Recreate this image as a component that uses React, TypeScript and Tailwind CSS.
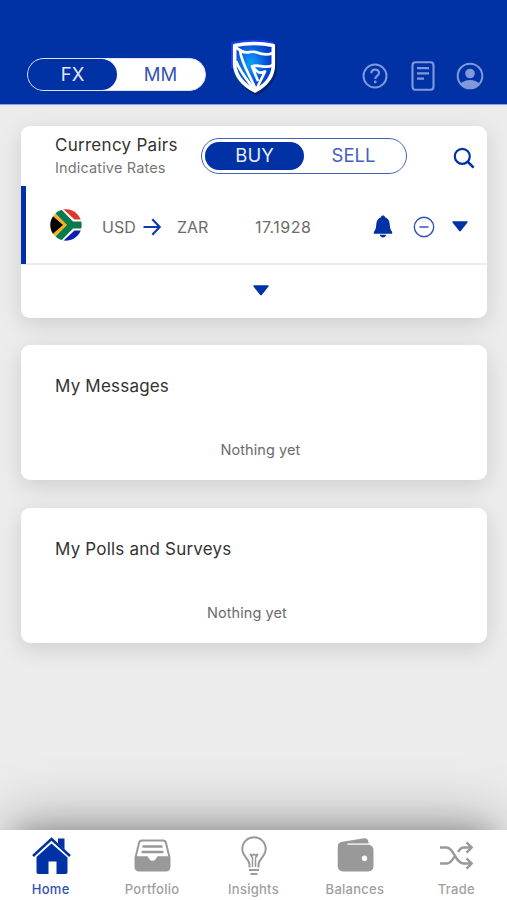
import classNames from "clsx";
import { useState } from "react";

type IconProps = React.ComponentProps<"svg">;

const ShieldLogo = (props: IconProps) => (
  <svg viewBox="0 0 48 58" fill="none" {...props}>
    <defs>
      <radialGradient id="shield" cx="0.42" cy="0.42" r="0.55">
        <stop offset="0" stopColor="#12a0f5" />
        <stop offset="0.5" stopColor="#0a6be4" />
        <stop offset="1" stopColor="#0638c4" />
      </radialGradient>
    </defs>
    <path
      d="M5 8Q24 3 44 8V27Q44 44 25 54Q7 44 5 27Z"
      stroke="#0a1d5e"
      strokeOpacity="0.750"
      strokeWidth="4"
      transform="translate(1 1.500)"
    />
    <path d="M2.500 30V5.500Q24 1 43 5.500" stroke="#1b3df0" strokeWidth="3" />
    <path
      d="M4.700 7.500Q24 3.500 43.300 7.500V27Q43.300 43 25 53Q6 43 4.700 27Z"
      fill="url(#shield)"
      stroke="#fff"
      strokeWidth="3.600"
      strokeLinejoin="round"
    />
    <path
      d="M5.500 9.500L11.500 13C17 16.500 21 12 27 14.500C33 17 37 17.500 43 15M10 12C11 25 20 37 26 52M6 23C10 34 18 43 24 51"
      stroke="#fff"
      strokeWidth="2.700"
      strokeLinejoin="round"
    />
    <path
      d="M28 43L22 28.500C28 25 35 32 43 27M22 28.500C25 30 26 33.500 29 34.500Q32 35 35 33.500L27 50"
      stroke="#fff"
      strokeWidth="2.700"
      strokeLinejoin="round"
    />
  </svg>
);

const HelpIcon = (props: IconProps) => (
  <svg viewBox="0 0 26 26" fill="none" stroke="currentColor" {...props}>
    <circle cx="13" cy="13" r="11.500" strokeWidth="2" />
    <path d="M9.300 10.300C9.300 5.400 17 5.500 17 10C17 12.700 13.200 13 13.200 16" strokeWidth="2.200" />
    <circle cx="13.200" cy="18.900" r="1.400" fill="currentColor" stroke="none" />
  </svg>
);

const DocumentIcon = (props: IconProps) => (
  <svg viewBox="0 0 24 30" fill="none" stroke="currentColor" {...props}>
    <rect x="1.500" y="1.200" width="21" height="27.600" rx="3" strokeWidth="2.100" />
    <path d="M6 7.200H18M6 12.400H18M6 17.600H13" strokeWidth="2.200" />
  </svg>
);

const ProfileIcon = (props: IconProps) => (
  <svg viewBox="0 0 28 28" fill="none" {...props}>
    <circle cx="14" cy="14" r="12.300" stroke="currentColor" strokeWidth="2" />
    <circle cx="14" cy="11.500" r="4.800" fill="currentColor" />
    <path d="M4.500 22C8.500 16.800 19.500 16.800 23.500 22C18.500 28 9.500 28 4.500 22Z" fill="currentColor" />
  </svg>
);

const SearchIcon = (props: IconProps) => (
  <svg viewBox="0 0 22 22" fill="none" stroke="currentColor" {...props}>
    <circle cx="9.300" cy="9.300" r="7.500" strokeWidth="2.200" />
    <path d="M14.500 14.500L20.600 20.600" strokeWidth="2.500" />
  </svg>
);

const FlagIcon = (props: IconProps) => (
  <svg viewBox="0 0 32 32" {...props}>
    <clipPath id="flag">
      <circle cx="16" cy="16" r="15.700" />
    </clipPath>
    <g clipPath="url(#flag)">
      <path fill="#fff" d="M0 0H32V32H0Z" />
      <path fill="#e0362c" d="M13 0H32V10.500H24.500Z" />
      <path fill="#0c1fb0" d="M13 32H32V21.500H24.500Z" />
      <path d="M5 -1L21.500 16H33M5 33L21.500 16" fill="none" stroke="#0b7a4b" strokeWidth="7" />
      <path fill="#f5b324" d="M0 0L17 16L0 32Z" />
      <path fill="#000" d="M-1 4L13 16L-1 28Z" />
    </g>
  </svg>
);

const ArrowIcon = (props: IconProps) => (
  <svg viewBox="0 0 18 18" fill="none" stroke="currentColor" strokeWidth="2.200" {...props}>
    <path d="M0.500 9H16.500M9.300 1.200L16.700 9L9.300 16.800" />
  </svg>
);

const BellIcon = (props: IconProps) => (
  <svg viewBox="0 0 20 23" fill="currentColor" {...props}>
    <path d="M10 0.500C11.200 0.500 11.900 1.200 12 2.200C15 3.200 16.500 5.800 16.700 9C16.900 13 17.300 14.600 19.200 17V18.700H0.800V17C2.700 14.600 3.100 13 3.300 9C3.500 5.800 5 3.200 8 2.200C8.100 1.200 8.800 0.500 10 0.500Z" />
    <path d="M6.800 19.700H13.200C12.600 23.300 7.400 23.300 6.800 19.700Z" />
  </svg>
);

const MinusIcon = (props: IconProps) => (
  <svg viewBox="0 0 22 22" fill="none" stroke="currentColor" {...props}>
    <circle cx="11" cy="11" r="9.700" strokeWidth="1.400" />
    <path d="M6.500 11H15.500" strokeWidth="1.500" />
  </svg>
);

const CaretIcon = (props: IconProps) => (
  <svg viewBox="0 0 16 11" fill="currentColor" {...props}>
    <path d="M1 0.300H15Q16.200 0.500 15.500 1.600L8.800 10Q8 10.900 7.200 10L0.500 1.600Q-0.200 0.500 1 0.300Z" />
  </svg>
);

const HomeIcon = (props: IconProps) => (
  <svg viewBox="0 0 40 40" fill="currentColor" {...props}>
    <path d="M27 3.500H33.500V14.500L27 8.500Z" />
    <path d="M20.500 8.500L36.500 22.500V37.300Q36.500 39 34.800 39H25.500V26.500H17.500V39H7.200Q5.500 39 5.500 37.300V22Z" />
    <path d="M2 21L20.500 4L39 21" fill="none" stroke="currentColor" strokeWidth="2.500" />
  </svg>
);

const PortfolioIcon = (props: IconProps) => (
  <svg viewBox="0 0 40 40" fill="currentColor" {...props}>
    <path
      d="M10 5.500H31Q33.500 5.500 34 8L37.500 22.500V31.500Q37.500 35.500 33.500 35.500H7.500Q3.500 35.500 3.500 31.500V22.500L7 8Q7.500 5.500 10 5.500Z"
      fill="none"
      stroke="currentColor"
      strokeWidth="2"
    />
    <path d="M3.500 21.300H15Q16 21.300 16.500 22.700Q17.800 25.800 20.500 25.800Q23.200 25.800 24.500 22.700Q25 21.300 26 21.300H37.500V31.500Q37.500 35.500 33.500 35.500H7.500Q3.500 35.500 3.500 31.500Z" />
    <path d="M10.500 11.500H30.500M9.500 17H31.500" stroke="currentColor" strokeWidth="2.300" />
  </svg>
);

const InsightsIcon = (props: IconProps) => (
  <svg viewBox="0 0 40 40" fill="none" stroke="currentColor" strokeWidth="2" {...props}>
    <path d="M16.500 32.500V29.500C16.500 24 9.300 21.500 9.300 14C9.300 7.200 14.500 2.300 21 2.300S32.700 7.200 32.700 14C32.700 21.500 25.500 24 25.500 29.500V32.500" />
    <path d="M19.500 32V23L17 19L19.500 20.500L21 19L22.500 20.500L25 19L22.500 23V32" strokeWidth="1.500" />
    <path d="M16 35H26M17.500 39H24.500" strokeWidth="2" />
  </svg>
);

const BalancesIcon = (props: IconProps) => (
  <svg viewBox="0 0 40 40" fill="currentColor" {...props}>
    <path
      fillRule="evenodd"
      d="M2.700 12Q2.700 7.200 7.500 6.800L29 3.300Q32.900 2.800 33.500 7.300L34 9.800Q38.500 10.800 38.500 15.500V31Q38.500 36.400 33 36.400H8.200Q2.700 36.400 2.700 31ZM32.200 23.300A2.700 2.900 0 1 0 26.800 23.300A2.700 2.900 0 1 0 32.200 23.300Z"
    />
    <path d="M12.500 9.100H34" stroke="#fff" strokeOpacity="0.850" strokeWidth="1.500" />
  </svg>
);

const TradeIcon = (props: IconProps) => (
  <svg viewBox="0 0 40 40" fill="none" stroke="currentColor" strokeWidth="2.400" {...props}>
    <path d="M4 12.500H10.500C18 12.500 19.500 28.500 27.500 28.500H35.500M4 28.500H10.500C14.500 28.500 16.700 24.800 18.500 21.500M22 17C23.500 14.300 25 12.500 28 12.500H35.500" />
    <path d="M30.500 7.300L35.700 12.500L30.500 17.700M30.500 23.300L35.700 28.500L30.500 33.700" />
  </svg>
);

const tabs = [
  { label: "Home", Icon: HomeIcon },
  { label: "Portfolio", Icon: PortfolioIcon },
  { label: "Insights", Icon: InsightsIcon },
  { label: "Balances", Icon: BalancesIcon },
  { label: "Trade", Icon: TradeIcon },
];

const Header = () => {
  const [market, setMarket] = useState("FX");

  return (
    <header className="flex h-[105px] shrink-0 items-start border-b border-[#8fa0dc] bg-[#0032a5] pl-[27px] text-[#8099dc]">
      <div className="mt-[58px] flex h-[33px] w-[179px] rounded-full border border-[#dde4fa] bg-white text-[18.500px]">
        {["FX", "MM"].map((name) => (
          <button
            key={name}
            type="button"
            onClick={() => setMarket(name)}
            className={classNames(
              "flex h-full items-center justify-center rounded-full",
              market === name ? "w-[89px] bg-[#0032a5] text-[#e4e9fa]" : "w-[87px] text-[#3452b4]"
            )}
          >
            {name}
          </button>
        ))}
      </div>
      <ShieldLogo className="mt-[38px] ml-[24px] h-[58px] w-[48px]" />
      <HelpIcon className="mt-[63px] ml-[83.500px] size-[26px]" />
      <DocumentIcon className="mt-[61px] ml-[23px] h-[30px] w-[24px]" />
      <ProfileIcon className="mt-[62px] ml-[21px] size-[28px]" />
    </header>
  );
};

const CurrencyCard = () => {
  const [side, setSide] = useState("BUY");

  return (
    <section className="flex h-[192px] flex-col overflow-hidden rounded-[9px] bg-white shadow-[0_6px_22px_rgba(0,0,0,0.130)]">
      <div className="flex h-[60px] shrink-0 items-start pl-[34px]">
        <div className="w-[146px] pt-[8px] whitespace-nowrap">
          <h2 className="text-[17px] leading-[22px] tracking-[0.280px] text-[#333]">Currency Pairs</h2>
          <p className="mt-[2px] text-[14.500px] leading-[20px] tracking-[0.150px] text-[#777]">Indicative Rates</p>
        </div>
        <div className="mt-[12px] flex h-[36px] w-[206px] rounded-full border-[1.500px] border-[#4660bb] p-[3px] text-[18.500px]">
          {["BUY", "SELL"].map((name) => (
            <button
              key={name}
              type="button"
              onClick={() => setSide(name)}
              className={classNames(
                "flex h-full w-[99px] items-center justify-center rounded-full",
                side === name ? "bg-[#0032a5] text-[#e6ebfa]" : "text-[#4660bb]"
              )}
            >
              {name}
            </button>
          ))}
        </div>
        <SearchIcon className="mt-[21px] ml-[46px] size-[22px] text-[#0032a5]" />
      </div>
      <div className="flex h-[79px] shrink-0 items-center border-b-2 border-[#ededed] text-[16px] text-[#6b6b6b]">
        <div className="h-[78px] w-[5px] bg-[#0032a5]" />
        <FlagIcon className="ml-[24px] size-[32px]" />
        <div className="flex flex-1 items-center pt-[4px]">
          <span className="ml-[20px] w-[41px]">USD</span>
          <ArrowIcon className="size-[18px] text-[#0f3cad]" />
          <span className="ml-[16px] w-[78px]">ZAR</span>
          <span className="w-[118px] tracking-[0.500px]">17.1928</span>
          <BellIcon className="h-[23px] w-[20px] text-[#0032a5]" />
          <MinusIcon className="ml-[19.500px] size-[22px] text-[#3452b4]" />
          <CaretIcon className="ml-[17.500px] h-[11px] w-[16px] text-[#0032a5]" />
        </div>
      </div>
      <div className="flex flex-1 items-center justify-center pb-[3px] pl-[14px] text-[#0032a5]">
        <CaretIcon className="h-[11px] w-[16px]" />
      </div>
    </section>
  );
};

const EmptyCard = ({ title, noteClassName }: { title: string; noteClassName: string }) => (
  <section className="flex h-[135px] flex-col rounded-[9px] bg-white pl-[34px] shadow-[0_6px_22px_rgba(0,0,0,0.130)]">
    <h2 className="mt-[30px] text-[17px] leading-[22px] tracking-[0.200px] text-[#333]">{title}</h2>
    <p className={classNames("mt-[43px] text-[14.500px] leading-[20px] tracking-[0.060px] text-[#6b6b6b]", noteClassName)}>
      Nothing yet
    </p>
  </section>
);

const App = () => {
  const [active, setActive] = useState("Home");

  return (
    <div className="flex h-[900px] w-[507px] flex-col overflow-hidden bg-[#ececec] font-['Inter','Liberation_Sans',sans-serif]">
      <Header />
      <main className="flex flex-1 flex-col pt-[21px] pr-[20px] pl-[21px]">
        <CurrencyCard />
        <div className="mt-[27.400px] flex flex-col gap-[28px]">
          <EmptyCard title="My Messages" noteClassName="pl-[165.500px]" />
          <EmptyCard title="My Polls and Surveys" noteClassName="pl-[152px]" />
        </div>
      </main>
      <nav className="grid h-[70.500px] shrink-0 grid-cols-5 bg-white shadow-[0_-12px_30px_-16px_rgba(0,0,0,0.360),0_-18px_60px_-8px_rgba(0,0,0,0.270)]">
        {tabs.map(({ label, Icon }) => (
          <button
            key={label}
            type="button"
            onClick={() => setActive(label)}
            className={classNames(
              "flex flex-col items-center pt-[5px] text-[13px] leading-[16px] font-medium tracking-[0.250px]",
              active === label ? "text-[#0032a5]" : "text-[#999]"
            )}
          >
            <Icon className="size-[40px]" />
            <span className={classNames("mt-[6px]", active === label ? "text-[#3452b4]" : "text-[#a0a0a0]")}>
              {label}
            </span>
          </button>
        ))}
      </nav>
    </div>
  );
};

export default App;
